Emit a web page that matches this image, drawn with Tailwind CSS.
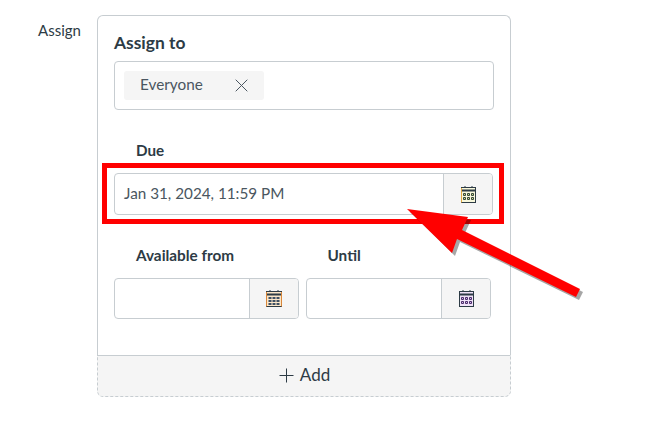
<!doctype html>
<html><head><meta charset="utf-8"><script src="https://cdn.jsdelivr.net/npm/@tailwindcss/browser@4"></script></head>
<body class="bg-white">
<div class="relative w-[649px] h-[429px] overflow-hidden font-['Lato','sans-serif'] text-[#2d3b45]">
  <div class="flex pt-[15px]">
    <div class="w-[97px] pl-[38px] pt-[6px] text-[15px] leading-[18px]">Assign</div>
    <div class="w-[414px] h-[382px] flex flex-col">
      <div class="h-[340px] border border-b-0 border-[#c7cdd1] rounded-t-[6px] pl-[16px] pt-[16px]">
        <div class="text-[17.400px] font-bold leading-[22px] h-[29px]">Assign to</div>
        <div class="w-[380px] h-[49px] border border-[#c7cdd1] rounded-[4px] p-[9px] flex items-start">
          <div class="w-[140px] h-[29px] bg-[#f5f5f5] rounded-[3px] flex items-center pl-[16px] pb-[2px] text-[15.300px] text-[#4a5660]">
            <span class="w-[95px]">Everyone</span>
            <svg class="mt-[2px]" width="13" height="13" viewBox="0 0 13 13" fill="none" stroke="#4a5660" stroke-width="1"><path d="M.7.7l11.6 11.600M12.300.7L.7 12.300"/></svg>
          </div>
        </div>
        <div class="pl-[22px] pt-[31px] text-[15.200px] font-bold leading-[18px] h-[63px]">Due</div>
        <div class="w-[379px] h-[42px] border border-[#c7cdd1] rounded-[4px] flex overflow-hidden">
          <div class="flex-1 pl-[9px] text-[15.250px] leading-[38px] text-[#4a5660]">Jan 31, 2024, 11:59 PM</div>
          <div class="w-[49px] bg-[#f5f5f5] border-l border-[#c7cdd1] flex items-center justify-center">
            <svg width="15" height="17" viewBox="0 0 15 17" fill="none"><path d="M4 0v3M11 0v3" stroke="#2d3b45"/><rect x=".5" y="1.500" width="14" height="15" fill="#f8f8dc" stroke="#2d3b45"/><path d="M.5 4.500h14" stroke="#2d3b45" stroke-width="2"/><path d="M2.500 7.500h2v2h-2zM6.500 7.500h2v2h-2zM10.500 7.500h2v2h-2zM2.500 11.500h2v2h-2zM6.500 11.500h2v2h-2zM10.500 11.500h2v2h-2z" fill="#cfe08a" stroke="#34453a"/><path d="M.5 2v14.500" stroke="#e0a840"/></svg>
          </div>
        </div>
        <div class="flex pt-[31px] h-[63px] text-[15.300px] font-bold leading-[18px]">
          <div class="w-[192px] pl-[22px]">Available from</div>
          <div class="pl-[21.500px]">Until</div>
        </div>
        <div class="flex gap-[7px]">
          <div class="w-[185px] h-[41px] border border-[#c7cdd1] rounded-[4px] flex overflow-hidden">
            <div class="flex-1"></div>
            <div class="w-[49px] bg-[#f5f5f5] border-l border-[#c7cdd1] flex items-center justify-center">
              <svg width="16" height="17" viewBox="0 0 16 17" fill="none"><path d="M4 0v3M12 0v3" stroke="#2d3b45"/><rect x=".5" y="1.500" width="15" height="15" fill="#fbe6c8" stroke="#2d3b45"/><path d="M.5 4.500h15" stroke="#2d3b45" stroke-width="2"/><path d="M2.500 7h3v2h-3zM6.500 7h3v2h-3zM10.500 7h3v2h-3zM2.500 10h3v2h-3zM6.500 10h3v2h-3zM10.500 10h3v2h-3zM2.500 13h3v2h-3zM6.500 13h3v2h-3zM10.500 13h3v2h-3z" fill="#3d4f63"/><path d="M.5 2v14.500M15.500 2v14.500" stroke="#d9873a"/></svg>
            </div>
          </div>
          <div class="w-[185px] h-[41px] border border-[#c7cdd1] rounded-[4px] flex overflow-hidden">
            <div class="flex-1"></div>
            <div class="w-[49px] bg-[#f5f5f5] border-l border-[#c7cdd1] flex items-center justify-center">
              <svg width="15" height="17" viewBox="0 0 15 17" fill="none"><path d="M4 0v3M11 0v3" stroke="#2d3b45"/><rect x=".5" y="1.500" width="14" height="15" fill="#f0e2f8" stroke="#2d3b45"/><path d="M.5 4.500h14" stroke="#2d3b45" stroke-width="2"/><path d="M2.500 7.500h2v2h-2zM6.500 7.500h2v2h-2zM10.500 7.500h2v2h-2zM2.500 11.500h2v2h-2zM6.500 11.500h2v2h-2zM10.500 11.500h2v2h-2z" fill="#d5b8ea" stroke="#4a2d6a"/></svg>
            </div>
          </div>
        </div>
      </div>
      <div class="h-[42px] bg-[#f5f5f5] border border-t-0 border-dashed border-[#c7cdd1] rounded-b-[6px] flex items-center justify-center gap-[6px] text-[17px] shadow-[inset_0_1px_0_#c7cdd1] pb-[2px] pl-[1px]">
        <svg class="mt-[2px]" width="15" height="15" viewBox="0 0 15 15" fill="none" stroke="#2d3b45"><path d="M7.500.5v14M.5 7.500h14"/></svg>
        <span>Add</span>
      </div>
    </div>
  </div>
  <div class="absolute left-[102px] top-[163px] w-[402px] h-[61px] border-[5px] border-[#ff0000]"></div>
  <svg class="absolute left-0 top-0" width="649" height="429" viewBox="0 0 649 429">
    <path d="M407 209L468 217 462 230 580 289 576 297 457 239 452 253Z" fill="#000" opacity=".35" transform="translate(3 3)"/>
    <path d="M407 209L468 217 462 230 580 289 576 297 457 239 452 253Z" fill="#ff0000"/>
  </svg>
</div>
</body></html>
